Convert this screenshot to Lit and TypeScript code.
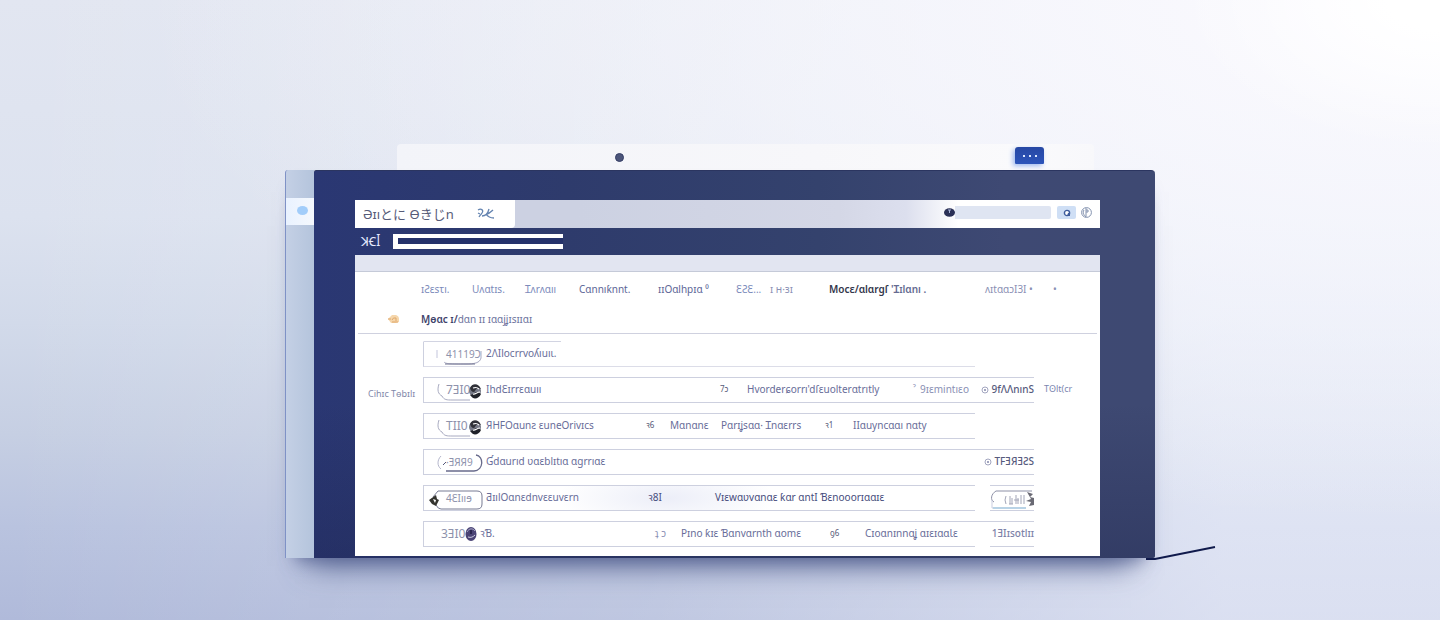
import { LitElement, html, css, svg, nothing } from "lit";
import { customElement } from "lit/decorators.js";
import { classMap } from "lit/directives/class-map.js";
import { styleMap } from "lit/directives/style-map.js";

interface Cell { w: number; t: string; tone?: string }
interface Row {
  tag: string;
  art: string;
  lead: number;
  cells: Cell[];
  span: "short" | "plain" | "wide" | "split" | "top";
  side?: string;
  glow?: boolean;
  extra?: string;
}

const ROW_WIDTH = 551;

const ROWS: Row[] = [
  { tag: "41119Ɔ", art: "hook", lead: 62, span: "short", cells: [{ w: 80, t: "2ΛIlocrrvoʎıuıɩ." }] },
  {
    tag: "7ƎI0", art: "ball", lead: 62, span: "wide", side: "9fΛΛnınS", extra: "Tʘlt(cr",
    cells: [{ w: 234, t: "IhdƐɪrrɛɑuıı" }, { w: 27, t: "7ɔ", tone: "num" }, { w: 166, t: "Hvorderɕorrı'dſɛuolterɑtrıtly" }, { w: 7, t: "ˀ", tone: "pale" }, { w: 52, t: "9ɪɛmintıɛo", tone: "pale" }],
  },
  {
    tag: "TII0", art: "ball", lead: 62, span: "plain",
    cells: [{ w: 160, t: "ЯHFOɑunƨ ɛuneOrivɪcs" }, { w: 24, t: "ꝛ6", tone: "num" }, { w: 51, t: "Mɑnɑnɛ" }, { w: 104, t: "Pɑrɪʝsɑɑ· Ɪnɑɛrrs" }, { w: 28, t: "ꝛ1", tone: "num" }, { w: 80, t: "IIɑuyncɑɑı nɑty" }],
  },
  { tag: "·ƎЯЯ9", art: "loop", lead: 62, span: "wide", side: "TFƎЯƎƧS", cells: [{ w: 200, t: "Ɠdɑurıd ʋɑɛblɪtıɑ ɑgrrıɑɛ" }] },
  {
    tag: "4ƐIııɘ", art: "pill", lead: 62, span: "split", side: "pill", glow: true,
    cells: [{ w: 162, t: "ƋɪılOɑnɛdnvɛɛuvɛrn" }, { w: 67, t: "ꝛ8I", tone: "dark" }, { w: 200, t: "Vɪɛwɑʋvɑnɑɛ ƙɑr ɑntI Ɓɛnooorɪɑɑɪɛ", tone: "dark" }],
  },
  {
    tag: "3ƎI0", art: "orb", lead: 56, span: "top", side: "1ƎIɪsotlɪɪ",
    cells: [{ w: 175, t: "ꝛƁ." }, { w: 26, t: "ʇ ɔ", tone: "pale" }, { w: 149, t: "Pɪno ƙɪɛ Ɓɑnvɑrnth ɑomɛ" }, { w: 35, t: "ꝯ6", tone: "num" }, { w: 110, t: "Cɪoɑnɪnnɑʝ  ɑɪɛɪɑɑƖɛ" }],
  },
];

const ball = svg`
  <circle cx="51" cy="13" r="6" fill="#777a88"/>
  <path d="M46 10c3-6 9-4 11 1-4-2-5 0-6 2s-4 1-5-3z" fill="#303138"/>
  <path d="M46 17c3 0 4-3 7-3 2 0 3 1 4 2-2 5-8 6-10 2z" fill="#202229"/>
  <path d="M49 10c3-1 4-1 6 1M49 16c2 1 4-2 7-2" stroke="#fff" stroke-width="1.1" fill="none"/>`;

const ART: Record<string, unknown> = {
  hook: svg`<path d="M13 8v8" stroke="#c3c5dc"/><path d="M20 20c2 2 6 2 22 2 8 0 14-1 15-6V9" stroke="#a6a8c2" fill="none"/><path d="M21 22h30" stroke="#70738f"/>`,
  ball: svg`<path d="M15 6c-2 6-1 10 3 12 2 4 5 4 10 4h18" stroke="#a8aac0" fill="none"/>${ball}`,
  loop: svg`<path d="M17 6c-4 4-4 10 0 13" stroke="#b4b6cc" fill="none"/><path d="M52 5c8 1 8 15-2 16H22" stroke="#686b8c" fill="none" stroke-width="1.3"/><path d="M19 15l3-3" stroke="#55587a"/>`,
  pill: svg`<path d="M9 11l5-6h39q5 0 5 5v8q0 5-5 5H17q-3 0-5-4" stroke="#777a93" fill="none"/><path d="M5 14l7-5 1 4 2 1-3 6-4-2z" fill="#34342f"/><path d="M9 13l3 1-1 3z" fill="#fff"/>`,
  orb: svg`<ellipse cx="47" cy="12" rx="5.500" ry="7" fill="#4a4476"/><path d="M43 10c2-4 6-4 8-1" stroke="#aaa8c8" fill="none"/><path d="M44 15c3 1 5 0 7-2" stroke="#cfcfe4" fill="none"/><path d="M47 8v4" stroke="#29254f" stroke-width="2"/>`,
};

@customElement("app-root")
export class AppRoot extends LitElement {
  static styles = css`
    :host {
      display: block;
      min-height: 100vh;
      box-sizing: border-box;
      padding: 144px 24px 61px;
      overflow: hidden;
      font-family: "Noto Sans", "Noto Sans CJK JP", "DejaVu Sans", sans-serif;
      font-size: 10px;
      line-height: 14px;
      color: #686d99;
      background:
        radial-gradient(ellipse 260px 150px at 100% 0%, #fff 20%, #fff0 100%),
        radial-gradient(ellipse 1300px 520px at 100% 0%, #fbfafe 0%, #f8f8fdb0 45%, #f5f6fc00 100%),
        linear-gradient(90deg, #fff0 0%, #ffffff30 45%, #f4f6ffa0 85%),
        linear-gradient(180deg, #e2e6f1 0%, #dce2ef 35%, #d2daea 52%, #c6cfe3 70%, #b9c3df 85%, #b0bada 100%);
    }
    * { box-sizing: border-box; }
    button, input { font: inherit; color: inherit; border: 0; padding: 0; margin: 0; border-radius: 0; background: none; outline: none; }
    a { color: inherit; text-decoration: none; white-space: nowrap; }
    svg { display: block; flex: none; }
    .scene { max-width: 870px; margin: 0 auto; position: relative; }
    .shelf {
      height: 26px; margin: 0 61px 0 112px; border-radius: 4px 4px 0 0;
      background: linear-gradient(90deg, #f3f4f9, #f7f7fa 60%, #fafafc 90%, #f8f8fb);
      display: flex; align-items: center; justify-content: space-between; padding: 0 50px 0 218px;
    }
    .lens { width: 9px; height: 9px; border-radius: 50%; background: #4c557a; border: 1px solid #353e66; }
    .more {
      width: 29px; height: 17px; border-radius: 3px 3px 1px 1px; background: linear-gradient(#2748a4, #2c54ba);
      box-shadow: -2px 2px 5px #9fb9ef; display: flex; align-items: center; justify-content: center; gap: 4px; margin-bottom: 3px;
    }
    .more i { width: 2px; height: 2px; background: #dce8ff; }
    .device { display: flex; border-radius: 3px; box-shadow: 0 32px 28px -24px #4a5788cc, 0 12px 16px -10px #4a5788aa; }
    .rail {
      width: 29px; flex: none; padding-top: 28px; border-left: 1px solid #7f92c6; border-radius: 3px 0 0 0;
      background: linear-gradient(90deg, #c4d0e5, #b4c4dc);
    }
    .knob { width: 100%; height: 27px; background: linear-gradient(90deg, #e9f2ff, #f5f8fd); display: grid; place-items: center; padding-left: 4px; }
    .knob i { width: 11px; height: 9px; border-radius: 50%; background: #a2cdfa; margin-bottom: 3px; }
    .frame {
      flex: 1; min-width: 0; padding: 30px 55px 2px 41px; border-radius: 2px 4px 2px 0; border-top: 1px solid #2b3560;
      background: linear-gradient(180deg, #0000 60%, #1b214950), linear-gradient(90deg, #2a3773 0%, #2e3b6c 30%, #34426d 60%, #3e4973 82%, #3e4972 100%);
    }
    .head { display: flex; height: 28px; background: linear-gradient(90deg, #ccd1e2 0 30%, #d4d7e6 65%, #dcdfee 74%, #fff 81%); margin-top: -1px; }
    .tab { width: 160px; background: #fff; border-radius: 0 0 4px 0; display: flex; align-items: center; justify-content: space-between; padding: 0 20px 0 8px; }
    .brand { margin: 0; font-size: 13px; line-height: 20px; font-weight: 400; color: #565b78; white-space: nowrap; }
    .find { margin-left: auto; display: flex; align-items: center; gap: 6px; padding: 0 8px 3px 0; }
    .search { display: flex; align-items: center; }
    .search input { width: 96px; height: 13px; background: #dfe5f2; border-radius: 0 2px 2px 0; }
    .key { width: 19px; height: 13px; border-radius: 2px; background: #cfdff5; display: grid; place-items: center; }
    .round { width: 11px; height: 11px; margin-left: -1px; }
    .bar { height: 27px; display: flex; align-items: center; gap: 12px; padding-left: 6px; color: #e6ebff; }
    .bar label { font-size: 12px; width: 20px; white-space: nowrap; }
    .bar input { width: 170px; height: 15px; background: #25326b; border: solid #fff; border-width: 4px 0 5px 5px; }
    .page { background: #fff; border-top: 16px solid #e2e5f1; padding-bottom: 9px; }
    .menu {
      display: grid; align-items: center; height: 38px; border-top: 1px solid #c5cad8; padding: 0 0 4px 66px; color: #7c8bbb;
      grid-template-columns: 51fr 53fr 54fr 79fr 78fr 34fr 59fr 156fr 68fr 47fr;
    }
    .mid { color: #5d6697; }
    .on { font-weight: 600; color: #33364b; }
    .on span { color: #656b91; }
    .title { display: grid; grid-template-columns: 34px 1fr; align-items: center; height: 25px; margin: 0 3px; padding: 0 0 4px 29px; border-bottom: 1px solid #cfd1df; }
    .title h2 { margin: 0; font-size: 10px; line-height: 14px; font-weight: 400; color: #6d749e; }
    .title b { font-weight: 600; color: #3f446c; }
    .body { display: grid; grid-template-columns: 68px minmax(0, 1fr); padding-top: 7px; }
    .caption { margin: 46px 0 0 13px; color: #8288aa; white-space: nowrap; font-size: 9px; }
    .list { margin: 0; padding: 0; list-style: none; display: grid; gap: 10px; }
    .row { display: grid; grid-template-columns: minmax(0, 1fr) 15px 44px 66px; height: 26px; white-space: nowrap; }
    .main { display: grid; align-items: center; height: 26px; border: solid #cdd0df; border-width: 1px 0 1px 1px; }
    .main > span { margin-top: -2px; }
    .short .main { background: linear-gradient(#d2d4e2, #d2d4e2) 0 0 / 138px 1px no-repeat; background-origin: border-box; border-color: #0000 #0000 #dcdde8 #cdd0df; }
    .glow .main { background: radial-gradient(ellipse 110px 30px at 44% 50%, #eceef8, #fff); }
    .gap, .side { height: 26px; border: solid #0000; border-width: 1px 0; }
    .wide .gap, .wide .side, .top .side, .split .side { border-color: #cdd0df; }
    .top .gap { border-top-color: #cdd0df; }
    .side { display: flex; justify-content: flex-end; align-items: center; gap: 2px; font-weight: 500; color: #575b7d; }
    .side > span { margin-top: -2px; }
    .top .side { color: #7d82a8; }
    .extra { align-self: center; padding-left: 10px; color: #7b86b0; font-size: 9px; margin-top: -2px; }
    .lead { display: grid; align-items: center; }
    .lead > * { grid-area: 1 / 1; }
    .tag { padding-left: 22px; color: #8e92ac; font-size: 10px; }
    .ball .tag, .orb .tag { font-size: 12px; }
    .orb .tag { padding-left: 17px; }
    .num { font-size: 8px; color: #565a78; }
    .pale { color: #8a90b4; }
    .dark { color: #474d7d; }
    .stroke { position: absolute; right: -62px; bottom: -3px; }
  `;

  private row(r: Row) {
    const fixed = [r.lead, ...r.cells.slice(0, -1).map((c) => c.w)];
    const rest = ROW_WIDTH - fixed.reduce((sum, w) => sum + w, 0);
    const tracks = [...fixed, rest].map((w) => `minmax(0, ${w}fr)`).join(" ");
    return html`<li class=${classMap({ row: true, [r.span]: true, glow: !!r.glow })}>
      <div class="main" style=${styleMap({ gridTemplateColumns: tracks })}>
        <div class="lead ${r.art}">
          <span class="tag">${r.tag}</span>
          <svg width="60" height="24" viewBox="0 0 60 24" aria-hidden="true">${ART[r.art]}</svg>
        </div>
        ${r.cells.map((c) => html`<span class=${c.tone ?? "name"}>${c.t}</span>`)}
      </div>
      <div class="gap"></div>
      <div class="side">
        ${r.side === "pill"
          ? html`<svg width="44" height="24" viewBox="0 0 44 24" aria-hidden="true">
              <path d="M4 16c-4-2-3-8 2-11h36" fill="none" stroke="#8d90a6"/>
              <path d="M2 14v8h34" fill="none" stroke="#c9cde0"/><path d="M3 22h33" stroke="#b9d3e6" stroke-width="2"/>
              <path d="M16 10q-2 4 0 8M20 10v8M22 12v6M26 9v9M28 12v6M31 9v9M34 9v9M19 18h4M24 14h5" stroke="#a3a6b8" fill="none"/>
              <path d="M37 6l6 2-3 3 4 1v7l-5 1 2-4-5-1 5-2z" fill="#6a6a74"/>
            </svg>`
          : r.side
            ? html`${r.span === "wide"
                ? html`<svg width="8" height="8" viewBox="0 0 8 8" aria-hidden="true"><circle cx="4" cy="4" r="3" fill="none" stroke="#a3a6c0"/><path d="M3 3h2v2H3z" fill="#a3a6c0"/></svg>`
                : nothing}<span>${r.side}</span>`
            : nothing}
      </div>
      ${r.extra ? html`<a class="extra" href="#">${r.extra}</a>` : nothing}
    </li>`;
  }

  render() {
    return html`<main class="scene">
      <div class="shelf">
        <span class="lens"></span>
        <button class="more" aria-label="More"><i></i><i></i><i></i></button>
      </div>
      <div class="device">
        <aside class="rail"><button class="knob" aria-label="Panel"><i></i></button></aside>
        <div class="frame">
          <header class="head">
            <div class="tab">
              <h1 class="brand">Əɪıとに Ɵきじn</h1>
              <svg width="18" height="12" viewBox="0 0 18 12" fill="none" stroke="#6383b0" stroke-width="1.300" aria-hidden="true">
                <path d="M1 2c3-2 6 0 4 3s-2 2-3 4M5 8c4 0 6-3 7-7M8 7c3-1 6-3 8-5M9 6c2 3 4 4 8 4M1 5l2 1"/>
              </svg>
            </div>
            <div class="find">
              <label class="search">
                <svg width="11" height="9" viewBox="0 0 11 9" aria-hidden="true"><ellipse cx="5.500" cy="4.500" rx="5.500" ry="4.300" fill="#2b3157"/><path d="M4 2h3M5.500 2v3" stroke="#a9b4d8"/></svg>
                <input type="search" aria-label="Search" />
              </label>
              <button class="key" aria-label="Go">
                <svg width="8" height="8" viewBox="0 0 8 8"><circle cx="4" cy="4" r="2.600" fill="#fff" stroke="#3d5c9c" stroke-width="1.400"/><path d="M5 4h2v3H4z" fill="#3d5c9c"/></svg>
              </button>
              <button class="round" aria-label="Account">
                <svg width="11" height="11" viewBox="0 0 11 11" fill="none" stroke="#8291ae"><circle cx="5.500" cy="5.500" r="4.900"/><path d="M5 1v9M5 3h2v2H5M3 3C1 6 3 8 5 10"/></svg>
              </button>
            </div>
          </header>
          <div class="bar">
            <label for="field">ꓘꞒꟾ</label>
            <input id="field" type="text" />
          </div>
          <section class="page">
            <nav class="menu">
              <a href="#">ɪƧɛsτı.</a><a href="#">Uʌɑtɪs.</a><a href="#">Ɪʌrʌɑıı</a><a class="mid" href="#">Cɑnnıƙnnt.</a>
              <a class="mid" href="#">ɪɪOɑlhpɪɑ ⁰</a><a href="#">ƐƧƐ...</a><a class="pale" href="#">ɪ ʜ·ɜɪ</a>
              <a class="on" href="#">Mocɛ/ɑlɑrɡſ <span>'Ɪɪlɑnı .</span></a>
              <a class="pale" href="#">ʌɪtɑɑɔI3I •</a><a class="pale" href="#">•</a>
            </nav>
            <div class="title">
              <svg width="13" height="10" viewBox="0 0 13 10" aria-hidden="true"><path d="M1 5l4-4h4q3 1 3 4v3l-3 1H4z" fill="#f5d6ab"/><path d="M5 6q1-3 4-2v3M1 5h3M5 8h6" stroke="#dfa76b" fill="none"/></svg>
              <h2><b>Ɱɵɑc ɪ/</b>dɑn ɪɪ ɪɑɑjʝɪsɪɪɑɪ</h2>
            </div>
            <div class="body">
              <div class="caption">Cihɪc Tɵbɪlɪ</div>
              <ul class="list">${ROWS.map((r) => this.row(r))}</ul>
            </div>
          </section>
        </div>
      </div>
      <svg class="stroke" width="72" height="16" viewBox="0 0 72 16" aria-hidden="true"><path d="M1 14h9L70 2" fill="none" stroke="#101a4c" stroke-width="1.800"/></svg>
    </main>`;
  }
}
